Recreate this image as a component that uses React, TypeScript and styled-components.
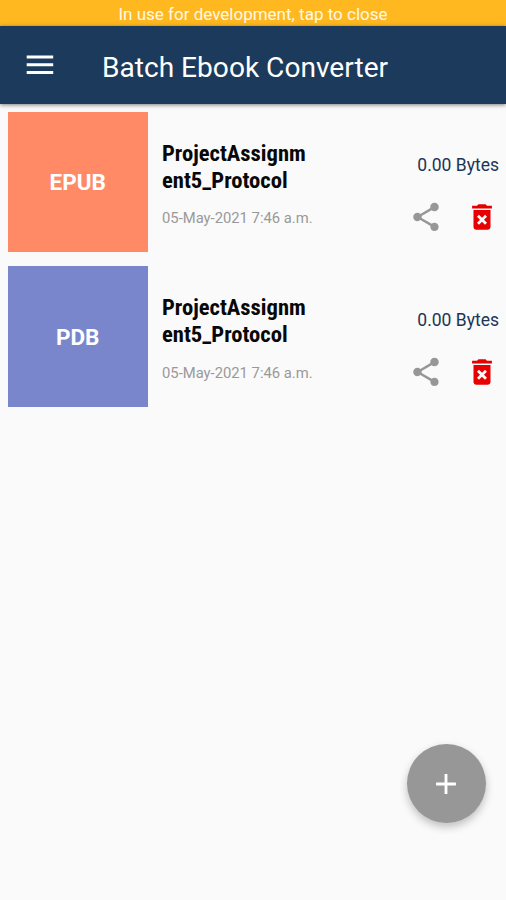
import React from "react";
import styled, { createGlobalStyle } from "styled-components";

const Global = createGlobalStyle`
  * { box-sizing: border-box; }
  body { margin: 0; background: #fafafa; font-family: Roboto, sans-serif; }
`;
const Screen = styled.main`
  position: relative;
  width: 506px;
  height: 900px;
  overflow: hidden;
  background: #fafafa;
`;
const Notice = styled.div`
  height: 26px;
  background: #ffb81f;
  color: #fff8e6;
  font-size: 17px;
  line-height: 28px;
  text-align: center;
  white-space: nowrap;
`;
const AppBar = styled.header`
  height: 78px;
  padding-left: 20px;
  display: flex;
  align-items: center;
  gap: 42px;
  background: #1c3b5c;
  color: #fff;
  box-shadow: 0 1px 4px rgba(0, 0, 0, 0.5);
`;
const Icon = styled.svg<{ $size: number }>`
  display: block;
  flex: none;
  width: ${(p) => p.$size}px;
  height: ${(p) => p.$size}px;
  fill: currentColor;
`;
const Title = styled.h1`
  margin: 5px 0 0;
  font-size: 28.1px;
  font-weight: 400;
  line-height: 36px;
  white-space: nowrap;
`;
const List = styled.ul`
  margin: 0;
  padding: 7.5px 7px 0 7.5px;
  list-style: none;
  display: grid;
  gap: 14.4px;
`;
const Row = styled.li`
  display: grid;
  grid-template-columns: 140.5px 1fr 100px;
  height: 140.5px;
`;
const Tile = styled.div<{ $color: string }>`
  display: flex;
  align-items: center;
  justify-content: center;
  background: ${(p) => p.$color};
  color: #fff;
  font-size: 22.5px;
  font-weight: 700;
`;
const Details = styled.div`
  padding: 28.1px 0 0 14px;
`;
const FileName = styled.div`
  width: 150px;
  color: #080808;
  font-family: "Roboto Condensed", Roboto, sans-serif;
  font-stretch: 75%;
  font-size: 22.6px;
  font-weight: 700;
  line-height: 27px;
`;
const NameLine = styled.span`
  display: block;
  white-space: nowrap;
`;
const Stamp = styled.time`
  display: block;
  margin-top: 14.4px;
  color: #999;
  font-size: 14.8px;
  line-height: 20px;
  white-space: nowrap;
`;
const Meta = styled.div`
  display: flex;
  flex-direction: column;
  align-items: flex-end;
  padding-top: 42.3px;
`;
const Size = styled.div`
  color: #1c3557;
  font-size: 17.5px;
  line-height: 22px;
  white-space: nowrap;
`;
const Actions = styled.div`
  display: flex;
  margin-top: 24px;
  gap: 22px;
`;
const IconButton = styled.button<{ $color: string }>`
  padding: 0;
  border: 0;
  background: none;
  color: ${(p) => p.$color};
`;
const AddButton = styled.button`
  position: absolute;
  left: 407px;
  top: 744px;
  width: 79px;
  height: 79px;
  padding: 0 1px 0 0;
  border: 0;
  border-radius: 50%;
  display: grid;
  place-items: center;
  background: #979797;
  color: #fff;
  box-shadow: 0 4px 9px rgba(0, 0, 0, 0.24);
`;

const files = [
  { format: "EPUB", color: "#ff8a65", name: ["ProjectAssignm", "ent5_Protocol"], date: "05-May-2021 7:46 a.m.", size: "0.00 Bytes" },
  { format: "PDB", color: "#7986cb", name: ["ProjectAssignm", "ent5_Protocol"], date: "05-May-2021 7:46 a.m.", size: "0.00 Bytes" },
];

export default function App() {
  return (
    <Screen>
      <Global />
      <Notice>In use for development, tap to close</Notice>
      <AppBar>
        <Icon $size={40} viewBox="0 0 40 40"><path d="M6.7 10.5h26.5v3H6.7zM6.7 18.3h26.5v3H6.7zM6.7 26.1h26.5v3H6.7z" /></Icon>
        <Title>Batch Ebook Converter</Title>
      </AppBar>
      <List>
        {files.map((f) => (
          <Row key={f.format}>
            <Tile $color={f.color}>{f.format}</Tile>
            <Details>
              <FileName>{f.name.map((part) => <NameLine key={part}>{part}</NameLine>)}</FileName>
              <Stamp>{f.date}</Stamp>
            </Details>
            <Meta>
              <Size>{f.size}</Size>
              <Actions>
                <IconButton $color="#979797" aria-label="Share">
                  <Icon $size={34} viewBox="0 0 24 24"><path d="M18 16.08c-.76 0-1.44.3-1.96.77L8.91 12.7c.05-.23.09-.46.09-.7s-.04-.47-.09-.7l7.05-4.11c.54.5 1.25.81 2.04.81 1.66 0 3-1.34 3-3s-1.34-3-3-3-3 1.34-3 3c0 .24.04.47.09.7L8.04 9.81C7.5 9.31 6.79 9 6 9c-1.66 0-3 1.34-3 3s1.34 3 3 3c.79 0 1.5-.31 2.04-.81l7.12 4.16c-.05.21-.08.43-.08.65 0 1.61 1.31 2.92 2.92 2.92s2.92-1.31 2.92-2.92-1.31-2.92-2.92-2.92z" /></Icon>
                </IconButton>
                <IconButton $color="#e60000" aria-label="Delete">
                  <Icon $size={34} viewBox="0 0 24 24"><path d="M6 19c0 1.1.9 2 2 2h8c1.1 0 2-.9 2-2V7H6v12zm2.46-7.12l1.41-1.41L12 12.59l2.12-2.12 1.41 1.41L13.41 14l2.12 2.12-1.41 1.41L12 15.41l-2.12 2.12-1.41-1.41L10.59 14l-2.13-2.12zM15.5 4l-1-1h-5l-1 1H5v2h14V4z" /></Icon>
                </IconButton>
              </Actions>
            </Meta>
          </Row>
        ))}
      </List>
      <AddButton aria-label="Add"><Icon $size={34} viewBox="0 0 24 24"><path d="M19 13h-6v6h-2v-6H5v-2h6V5h2v6h6v2z" /></Icon></AddButton>
    </Screen>
  );
}
